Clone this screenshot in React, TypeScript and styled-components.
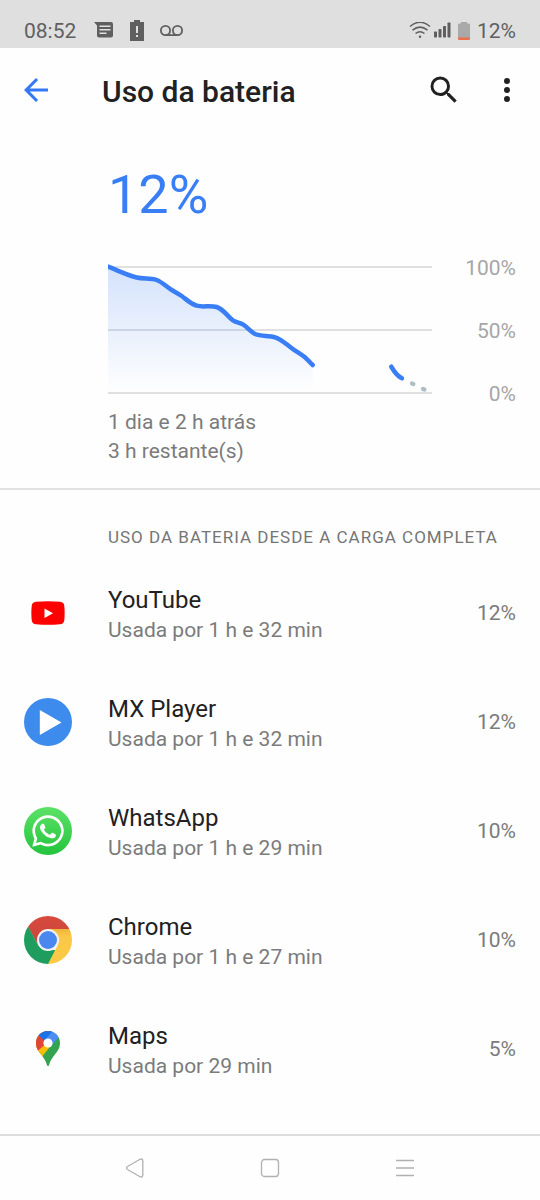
import React from "react";
import styled, { createGlobalStyle } from "styled-components";
import { FaWhatsapp } from "react-icons/fa";

const GlobalStyle = createGlobalStyle`
  *, *::before, *::after { box-sizing: border-box; }
  body {
    margin: 0;
    background: #fefefe;
    color: #212121;
    font-family: Roboto, "Liberation Sans", sans-serif;
  }
`;

const Screen = styled.div`
  display: flex;
  flex-direction: column;
  min-height: 100vh;
`;

const StatusBar = styled.div`
  display: flex;
  align-items: flex-end;
  justify-content: space-between;
  height: 48px;
  padding: 0 24px 4px;
  background: #dfdfdf;
  color: #5f5f5f;
  font-size: 21px;
  line-height: 26px;
`;

const StatusGroup = styled.div<{ $gap: number }>`
  display: flex;
  align-items: center;
  gap: ${(p) => p.$gap}px;
`;

const StatusIcons = styled.span<{ $gap: number }>`
  display: flex;
  align-items: center;
  gap: ${(p) => p.$gap}px;
`;

const AppBar = styled.header`
  display: flex;
  align-items: center;
  height: 84px;
  padding: 0 15px 0 18px;
`;

const IconButton = styled.button`
  display: grid;
  place-items: center;
  flex: none;
  width: 36px;
  height: 48px;
  padding: 0;
  border: 0;
  background: none;
  color: inherit;
`;

const BackButton = styled(IconButton)`
  color: #3478f6;
`;

const Title = styled.h1`
  flex: 1;
  margin: 0 0 0 48px;
  padding-top: 3px;
  font-size: 30px;
  line-height: 36px;
  font-weight: 500;
`;

const Actions = styled.div`
  display: flex;
  gap: 27px;
`;

const Summary = styled.section`
  padding: 30px 24px 22px 108px;
  border-bottom: 2px solid #e1e1e1;
`;

const Level = styled.p`
  margin: 0;
  color: #3a7ef5;
  font-size: 54px;
  line-height: 66px;
`;

const ChartRow = styled.div`
  display: flex;
  gap: 24px;
  margin-top: 36px;
`;

const Plot = styled.svg`
  flex: 1;
  min-width: 0;
  height: 132px;
`;

const Scale = styled.div`
  display: flex;
  flex-direction: column;
  justify-content: space-between;
  width: 60px;
  margin: -8px 0 -10px;
  color: #a6a6a6;
  font-size: 21px;
  line-height: 24px;
  text-align: right;
`;

const Span = styled.p`
  margin: 12px 0 0;
  color: #7b7b7b;
  font-size: 21px;
  line-height: 29px;
`;

const Usage = styled.section`
  flex: 1;
`;

const UsageHeading = styled.h2`
  margin: 0;
  padding: 35px 24px 9px 108px;
  color: #757575;
  font-size: 17px;
  line-height: 24px;
  font-weight: 400;
  letter-spacing: 1px;
`;

const AppList = styled.ul`
  margin: 0;
  padding: 0;
  list-style: none;
`;

const AppRow = styled.button`
  display: flex;
  align-items: center;
  width: 100%;
  height: 109px;
  padding: 0 24px;
  border: 0;
  background: none;
  color: inherit;
  font: inherit;
  text-align: left;
`;

const AppIcon = styled.span`
  display: grid;
  place-items: center;
  flex: none;
  width: 48px;
  height: 48px;
  margin-right: 36px;
`;

const AppText = styled.span`
  display: flex;
  flex: 1;
  flex-direction: column;
  padding-top: 4px;
`;

const AppName = styled.span`
  font-size: 24px;
  line-height: 30px;
`;

const AppDetail = styled.span`
  color: #7b7b7b;
  font-size: 21px;
  line-height: 30px;
`;

const WhatsAppBadge = styled.span`
  display: grid;
  place-items: center;
  width: 48px;
  height: 48px;
  border-radius: 50%;
  background: linear-gradient(#5ce267, #23c43d);
  color: #fff;
`;

const NavBar = styled.nav`
  display: grid;
  grid-template-columns: repeat(3, 135px);
  justify-content: center;
  justify-items: center;
  align-items: center;
  height: 66px;
  border-top: 2px solid #dedede;
  color: #b0b0b0;
`;

const YouTubeIcon = () => (
  <svg width="34" height="24" viewBox="0 0 34 24" aria-hidden="true">
    <path d="M5 .7Q17-.3 29 .7q4 .3 4.300 4.300.7 7 0 14-.3 4-4.300 4.300-12 1-24 0-4-.3-4.300-4.300-.7-7 0-14Q1 1 5 .7z" fill="#f00" />
    <path d="M13.500 7.500v9.500l8.500-4.700z" fill="#fff" />
  </svg>
);

const MxPlayerIcon = () => (
  <svg width="48" height="48" viewBox="0 0 48 48" aria-hidden="true">
    <circle cx="24" cy="24" r="24" fill="#3d8bec" />
    <path d="M15.800 12v25L37.500 24.500z" fill="#fff" />
  </svg>
);

const WhatsAppIcon = () => (
  <WhatsAppBadge>
    <FaWhatsapp size={36} aria-hidden="true" />
  </WhatsAppBadge>
);

const ChromeIcon = () => (
  <svg width="48" height="48" viewBox="0 0 48 48" aria-hidden="true">
    <defs>
      <clipPath id="chromeDisc">
        <circle cx="24" cy="24" r="24" />
      </clipPath>
      <linearGradient id="chromeRed" x1="0" y1="0" x2="0" y2="1">
        <stop offset="0" stopColor="#d84b3e" />
        <stop offset="1" stopColor="#c9433a" />
      </linearGradient>
      <linearGradient id="chromeYellow" x1="0" y1="0" x2="0" y2="1">
        <stop offset="0" stopColor="#eeb53b" />
        <stop offset=".2" stopColor="#fbc746" />
        <stop offset="1" stopColor="#fdca48" />
      </linearGradient>
    </defs>
    <g clipPath="url(#chromeDisc)">
      <path d="M0 0h48v13H24L14.500 29.500 4.500 12z" fill="url(#chromeRed)" />
      <path d="M4.500 11.500 14.500 29.500 24 34h8L24 50H0V8z" fill="#1f9d5e" />
      <path d="M24 13h24v37H23l10.500-20.500z" fill="url(#chromeYellow)" />
    </g>
    <circle cx="24" cy="24" r="11" fill="#f1f3f4" />
    <circle cx="24" cy="24" r="9" fill="#4a87ee" />
  </svg>
);

const MapsIcon = () => (
  <svg width="24" height="36" viewBox="0 0 24 36" aria-hidden="true">
    <defs>
      <clipPath id="mapsPin">
        <path d="M12 0C5.300 0 0 5.400 0 12c0 5 2.400 8 5.500 12 3 3.800 4.500 6.500 5.300 9.700.5 1.800 1.900 1.800 2.400 0 .8-3.200 2.300-5.900 5.300-9.700C21.600 20 24 17 24 12 24 5.400 18.700 0 12 0z" />
      </clipPath>
    </defs>
    <g clipPath="url(#mapsPin)">
      <path d="M0 0h24v36H0z" fill="#34a350" />
      <path d="M-4 12 17 12 5 27-4 30z" fill="#fbbc04" />
      <path d="M-2 0h18L8.500 14 1.500 20-4 20z" fill="#e54335" />
      <path d="M2.500 4.500 8.500 9.500 12 10 18 0H2z" fill="#1a73e8" />
      <path d="M8.500 9.500 17-.5h13L22.500 6.500 15 15z" fill="#4c8df6" />
    </g>
    <circle cx="12" cy="12" r="4.600" fill="#fff" />
  </svg>
);

const apps = [
  { name: "YouTube", detail: "Usada por 1 h e 32 min", share: "12%", Icon: YouTubeIcon },
  { name: "MX Player", detail: "Usada por 1 h e 32 min", share: "12%", Icon: MxPlayerIcon },
  { name: "WhatsApp", detail: "Usada por 1 h e 29 min", share: "10%", Icon: WhatsAppIcon },
  { name: "Chrome", detail: "Usada por 1 h e 27 min", share: "10%", Icon: ChromeIcon },
  { name: "Maps", detail: "Usada por 29 min", share: "5%", Icon: MapsIcon },
];

const curve =
  "M-3 1.600L0 2.700C10 6.500 19 11 28.700 13.500C36 15.300 42 13.500 48.700 16C54 18 58 22.500 63.700 26C67 28 70 29.300 73.700 32C79 36 83 40 88.700 41.700C95 43.500 102 41.200 108.700 43C116 45.500 120 53 125.300 56.700C128.500 58.700 132 58.700 135.300 60.700C139 63 142 67.500 147 70C153 72.500 160 71.500 167 73.300C174 75.500 179 81 185.300 85.300C189 87.800 193 90 197 93.300C200 96 202 98.500 204.700 101";

const BatteryChart = () => (
  <Plot viewBox="0 0 324 132" preserveAspectRatio="none" role="img" aria-label="Nível da bateria">
    <defs>
      <linearGradient id="chartFill" gradientUnits="userSpaceOnUse" x1="0" y1="0" x2="0" y2="129">
        <stop offset="0" stopColor="#3a7ef5" stopOpacity=".22" />
        <stop offset="1" stopColor="#3a7ef5" stopOpacity="0" />
      </linearGradient>
    </defs>
    <path d="M0 3H324M0 66H324M0 129H324" stroke="#e0e0e0" strokeWidth="2" />
    <path d={`${curve}V129H-3Z`} fill="url(#chartFill)" />
    <g fill="none" stroke="#3a7ef5" strokeWidth="4.500" strokeLinecap="round" strokeLinejoin="round">
      <path d={curve} />
      <path d="M283.300 102.700C286 107 288 111.500 294 114.300" />
    </g>
    <path d="M304 119.400l1.400.6M315 125l1.400.6" stroke="#b0bec5" strokeWidth="4.300" strokeLinecap="round" />
  </Plot>
);

export default function App() {
  return (
    <Screen>
      <GlobalStyle />
      <StatusBar>
        <StatusGroup $gap={18}>
          <span>08:52</span>
          <StatusIcons $gap={16}>
            <svg width="20" height="18" viewBox="0 0 20 18" aria-hidden="true">
              <path d="M0 0h17q2 0 2 2v11.500q0 2-2 2H5q-2 0-2-2V3.500z" fill="currentColor" />
              <path d="M5.500 4.300h11M5.500 7.800h11M5.500 11.300h7" stroke="#dfdfdf" strokeWidth="1.500" />
            </svg>
            <svg width="14" height="22" viewBox="0 0 14 22" aria-hidden="true">
              <path d="M4 0h6v2h4v19H0V2h4z" fill="currentColor" />
              <path d="M6 6h2v7H6zM6 15h2v2H6z" fill="#dfdfdf" />
            </svg>
            <svg width="23" height="12" viewBox="0 0 23 12" fill="none" stroke="currentColor" strokeWidth="1.800" aria-hidden="true">
              <circle cx="5.500" cy="5.500" r="4.600" />
              <circle cx="17.500" cy="5.500" r="4.600" />
              <path d="M5.500 10.100h12" />
            </svg>
          </StatusIcons>
        </StatusGroup>
        <StatusGroup $gap={6}>
          <StatusIcons $gap={3}>
            <svg width="22" height="18" viewBox="0 0 22 18" fill="none" stroke="currentColor" strokeWidth="1.500" aria-hidden="true">
              <path d="M1 4.500Q11-4 21 4.500M3.500 8.200Q11 2 18.500 8.200M6.500 11.500Q11 8 15.500 11.500" />
              <circle cx="11" cy="14.800" r="1.200" fill="currentColor" stroke="none" />
            </svg>
            <svg width="17" height="18" viewBox="0 0 17 18" fill="currentColor" aria-hidden="true">
              <rect x="0" y="9.500" width="3" height="6" rx=".7" />
              <rect x="4.500" y="7" width="3" height="8.500" rx=".7" />
              <rect x="9" y="4" width="3" height="11.500" rx=".7" />
              <rect x="13.500" y=".5" width="3" height="15" rx=".7" />
            </svg>
          </StatusIcons>
          <svg width="14" height="18" viewBox="0 0 14 18" aria-hidden="true">
            <path d="M4 0h6v1.500h2q1 0 1 1V16H1V2.500q0-1 1-1h2z" fill="#a9a9a9" />
            <path d="M1 15.500h12V17q0 1-1 1H2q-1 0-1-1z" fill="#e8704a" />
          </svg>
          <span>12%</span>
        </StatusGroup>
      </StatusBar>

      <AppBar>
        <BackButton type="button" aria-label="Voltar">
          <svg width="36" height="36" viewBox="0 0 24 24" fill="currentColor" aria-hidden="true">
            <path d="M20 11H7.830l5.590-5.590L12 4l-8 8 8 8 1.410-1.410L7.830 13H20v-2z" />
          </svg>
        </BackButton>
        <Title>Uso da bateria</Title>
        <Actions>
          <IconButton type="button" aria-label="Pesquisar">
            <svg width="36" height="36" viewBox="0 0 24 24" fill="currentColor" aria-hidden="true">
              <path d="M15.500 14h-.79l-.28-.27A6.471 6.471 0 0 0 16 9.500 6.500 6.500 0 1 0 9.500 16c1.610 0 3.090-.59 4.230-1.570l.27.28v.79l5 4.990L20.490 19l-4.990-5zm-6 0C7.010 14 5 11.990 5 9.500S7.010 5 9.500 5 14 7.010 14 9.500 11.990 14 9.500 14z" />
            </svg>
          </IconButton>
          <IconButton type="button" aria-label="Mais opções">
            <svg width="36" height="36" viewBox="0 0 24 24" fill="currentColor" aria-hidden="true">
              <circle cx="12" cy="6" r="2" />
              <circle cx="12" cy="12" r="2" />
              <circle cx="12" cy="18" r="2" />
            </svg>
          </IconButton>
        </Actions>
      </AppBar>

      <Summary>
        <Level>12%</Level>
        <ChartRow>
          <BatteryChart />
          <Scale>
            <span>100%</span>
            <span>50%</span>
            <span>0%</span>
          </Scale>
        </ChartRow>
        <Span>
          1 dia e 2 h atrás
          <br />3 h restante(s)
        </Span>
      </Summary>

      <Usage>
        <UsageHeading>USO DA BATERIA DESDE A CARGA COMPLETA</UsageHeading>
        <AppList>
          {apps.map(({ name, detail, share, Icon }) => (
            <li key={name}>
              <AppRow type="button">
                <AppIcon>
                  <Icon />
                </AppIcon>
                <AppText>
                  <AppName>{name}</AppName>
                  <AppDetail>{detail}</AppDetail>
                </AppText>
                <AppDetail>{share}</AppDetail>
              </AppRow>
            </li>
          ))}
        </AppList>
      </Usage>

      <NavBar aria-label="Sistema">
        <IconButton type="button" aria-label="Voltar à tela anterior">
          <svg width="20" height="20" viewBox="0 0 20 20" fill="none" stroke="currentColor" strokeWidth="1.300" aria-hidden="true">
            <path d="M2.500 8.500 15 1.300q2.500-1 2.800 1.500v14.400q-.3 2.500-2.800 1.500L2.500 11.500q-2-1.500 0-3z" />
          </svg>
        </IconButton>
        <IconButton type="button" aria-label="Início">
          <svg width="20" height="20" viewBox="0 0 20 20" fill="none" stroke="currentColor" strokeWidth="1.300" aria-hidden="true">
            <rect x="1.500" y="1.500" width="17" height="17" rx="3" />
          </svg>
        </IconButton>
        <IconButton type="button" aria-label="Recentes">
          <svg width="20" height="20" viewBox="0 0 20 20" stroke="currentColor" strokeWidth="1.300" aria-hidden="true">
            <path d="M1 2.500h18M1 10h18M1 17.500h18" />
          </svg>
        </IconButton>
      </NavBar>
    </Screen>
  );
}
